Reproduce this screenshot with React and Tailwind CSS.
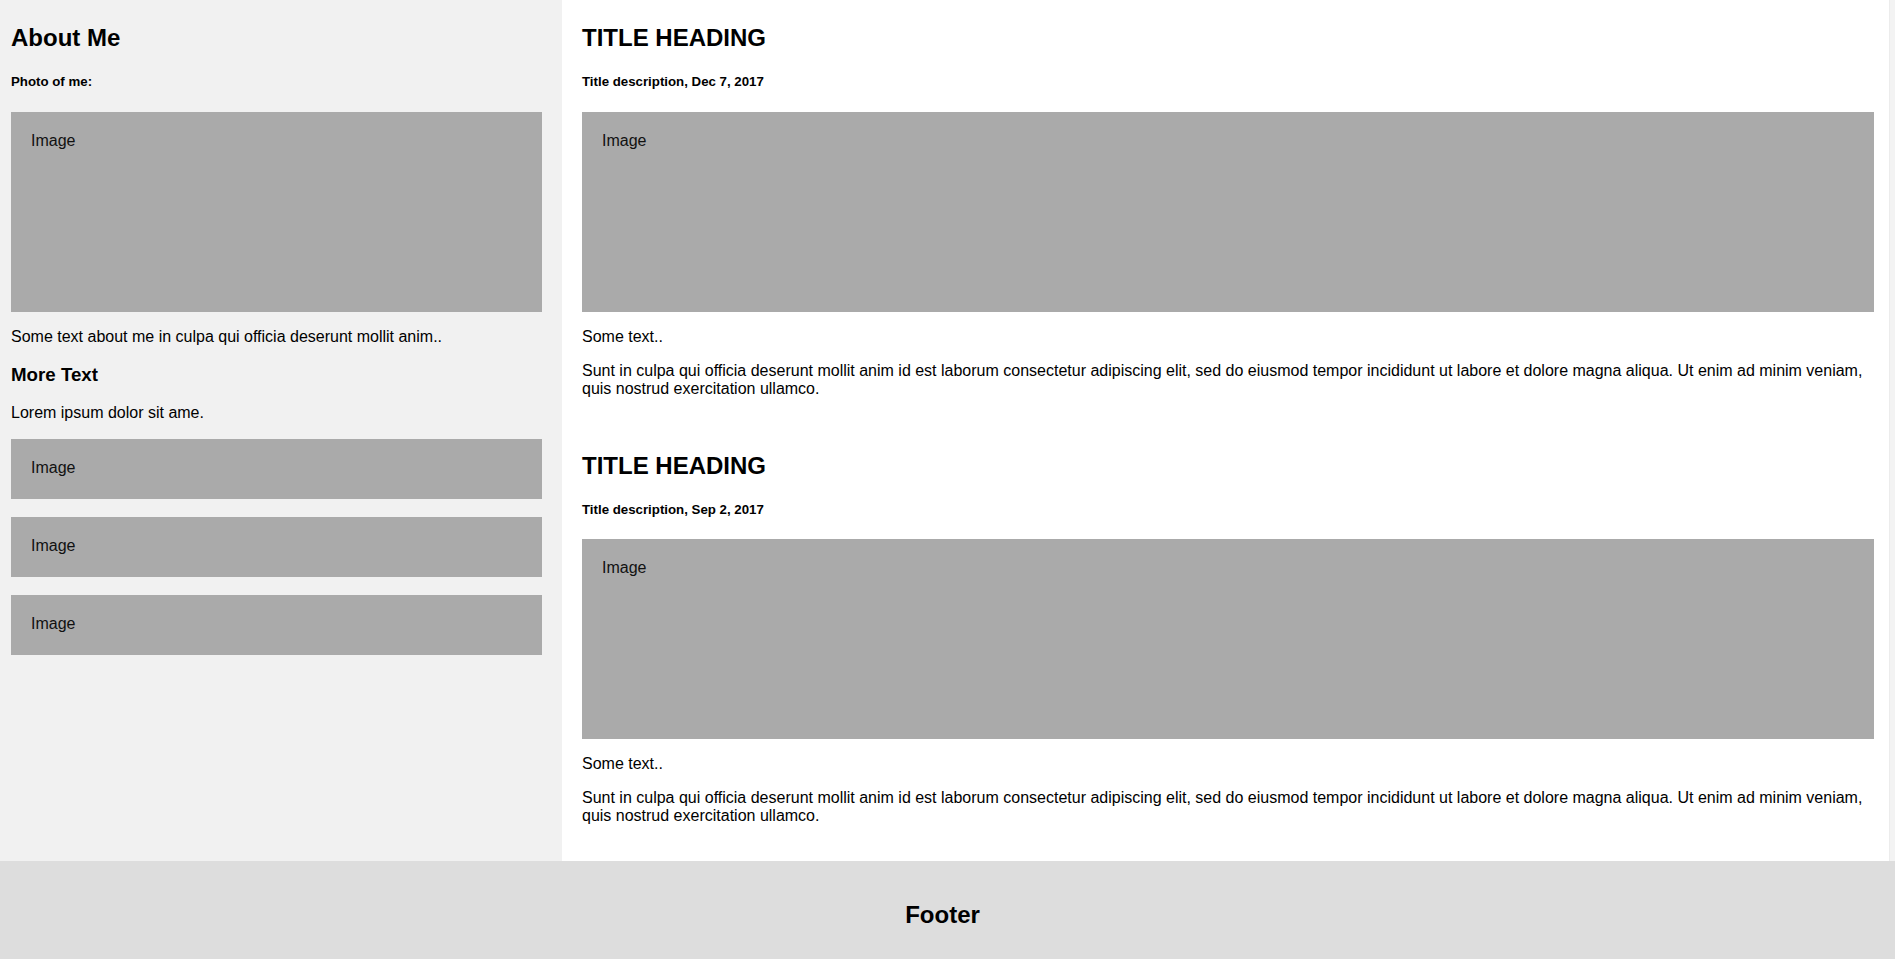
const POSTS = [
  { title: 'TITLE HEADING', desc: 'Title description, Dec 7, 2017' },
  { title: 'TITLE HEADING', desc: 'Title description, Sep 2, 2017' },
]

const LOREM =
  'Sunt in culpa qui officia deserunt mollit anim id est laborum consectetur adipiscing elit, sed do eiusmod tempor incididunt ut labore et dolore magna aliqua. Ut enim ad minim veniam, quis nostrud exercitation ullamco.'

function FakeImg({ tall }) {
  return (
    <div className={`bg-[#aaaaaa] px-[20px] pt-[20px] text-[16px] leading-[18px] text-[#111] ${tall ? 'h-[200px]' : 'h-[60px]'}`}>
      Image
    </div>
  )
}

function Post({ title, desc, first }) {
  return (
    <article className={first ? 'pt-[24px]' : 'pt-[54px]'}>
      <h2 className="text-[24px] leading-[28px] font-bold">{title}</h2>
      <h5 className="mt-[22px] text-[13.28px] leading-[16px] font-bold">{desc}</h5>
      <div className={first ? 'mt-[22px]' : 'mt-[21px]'}>
        <FakeImg tall />
      </div>
      <p className="mt-[16px]">Some text..</p>
      <p className="mt-[16px]">{LOREM}</p>
    </article>
  )
}

export default function App() {
  return (
    <div className="font-['Liberation_Sans',Arial,sans-serif] text-black text-[16px] leading-[18px]">
      {/* ── Columns ─────────────────────────────────────────────── */}
      <div className="flex">
        <aside className="w-[562px] shrink-0 bg-[#f1f1f1] pl-[11px] pr-[20px]">
          <h2 className="pt-[24px] text-[24px] leading-[28px] font-bold">About Me</h2>
          <h5 className="mt-[22px] text-[13.28px] leading-[16px] font-bold">Photo of me:</h5>
          <div className="mt-[22px]">
            <FakeImg tall />
          </div>
          <p className="mt-[16px]">Some text about me in culpa qui officia deserunt mollit anim..</p>
          <h3 className="mt-[18px] text-[18.72px] leading-[22px] font-bold">More Text</h3>
          <p className="mt-[18px]">Lorem ipsum dolor sit ame.</p>
          <div className="mt-[17px] flex flex-col gap-[18px]">
            <FakeImg />
            <FakeImg />
            <FakeImg />
          </div>
        </aside>

        <main className="flex-1 bg-white pl-[20px] pr-[15px] pb-[36px]">
          {POSTS.map((p, i) => (
            <Post key={i} {...p} first={i === 0} />
          ))}
        </main>

        <div className="w-[6px] shrink-0 bg-[#f3f3f3] border-l border-[#ececec]" />
      </div>

      {/* ── Footer ──────────────────────────────────────────────── */}
      <footer className="bg-[#dddddd] pt-[40px] pb-[30px] pr-[10px] text-center">
        <h2 className="text-[24px] leading-[28px] font-bold">Footer</h2>
      </footer>
    </div>
  )
}
